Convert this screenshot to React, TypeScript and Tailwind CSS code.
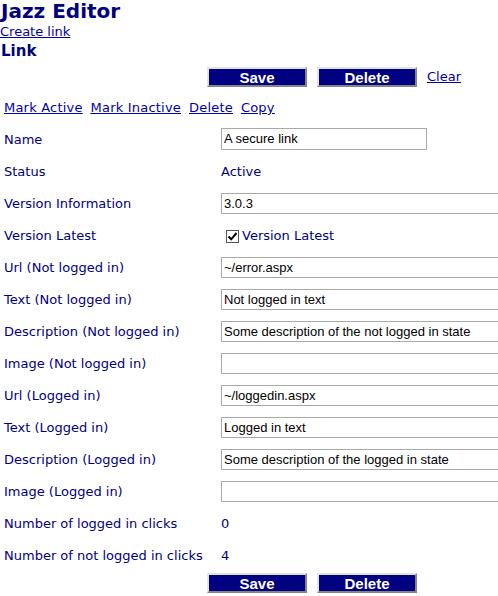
const rows: { label: string; kind: 'input' | 'text' | 'check'; value: string; short?: boolean }[] = [
  { label: 'Name', kind: 'input', value: 'A secure link', short: true },
  { label: 'Status', kind: 'text', value: 'Active' },
  { label: 'Version Information', kind: 'input', value: '3.0.3' },
  { label: 'Version Latest', kind: 'check', value: 'Version Latest' },
  { label: 'Url (Not logged in)', kind: 'input', value: '~/error.aspx' },
  { label: 'Text (Not logged in)', kind: 'input', value: 'Not logged in text' },
  { label: 'Description (Not logged in)', kind: 'input', value: 'Some description of the not logged in state' },
  { label: 'Image (Not logged in)', kind: 'input', value: '' },
  { label: 'Url (Logged in)', kind: 'input', value: '~/loggedin.aspx' },
  { label: 'Text (Logged in)', kind: 'input', value: 'Logged in text' },
  { label: 'Description (Logged in)', kind: 'input', value: 'Some description of the logged in state' },
  { label: 'Image (Logged in)', kind: 'input', value: '' },
  { label: 'Number of logged in clicks', kind: 'text', value: '0' },
  { label: 'Number of not logged in clicks', kind: 'text', value: '4' },
];

const verdana = "font-['Verdana','DejaVu_Sans',sans-serif]";
const arial = "font-['Arial','Liberation_Sans',sans-serif]";

const NavyButton = ({ children }: { children: string }) => (
  <button
    className={`w-[100px] h-[20px] bg-[#000080] text-white font-bold text-[15px] leading-none ${arial} border-2 border-t-[#e3e3e3] border-l-[#e3e3e3] border-r-[#858585] border-b-[#858585]`}
  >
    {children}
  </button>
);

export default function App() {
  return (
    <div className={`w-[498px] h-[596px] overflow-hidden bg-white text-[#000080] ${verdana}`}>
      <h1 className="text-[20px] font-bold leading-[22px] pl-[1px]">Jazz Editor</h1>
      <div className="text-[13px] leading-[20px]">
        <a className="text-[#0000aa] underline">Create link</a>
      </div>
      <h2 className="text-[15px] font-bold leading-[18px] pl-[1px]">Link</h2>

      <div className="flex items-center pt-[7px] pl-[207px] gap-[10px]">
        <NavyButton>Save</NavyButton>
        <NavyButton>Delete</NavyButton>
        <a className="text-[13px] text-[#0000aa] underline">Clear</a>
      </div>

      <div className="flex gap-[8px] pl-[4px] mt-[11px] text-[13px] leading-[20px] tracking-[0.2px] text-[#0000aa] underline">
        <a>Mark Active</a>
        <a>Mark Inactive</a>
        <a>Delete</a>
        <a>Copy</a>
      </div>

      <div className="mt-[6px]">
        {rows.map((r) => (
          <div key={r.label} className="flex items-center h-[32px] text-[13px]">
            <div className="w-[221px] shrink-0 pl-[4px] whitespace-nowrap">{r.label}</div>
            {r.kind === 'input' && (
              <div
                className={`${r.short ? 'w-[206px] h-[22px]' : 'w-[290px] h-[21px]'} -mt-[2px] shrink-0 border border-[#a9a9a9] bg-white text-black ${arial} text-[13px] leading-[19px] px-[2px] whitespace-nowrap overflow-hidden`}
              >
                {r.value}
              </div>
            )}
            {r.kind === 'text' && <div>{r.value}</div>}
            {r.kind === 'check' && (
              <div className="flex items-center pl-[5px]">
                <span className="w-[13px] h-[13px] border border-[#555] bg-white flex items-center justify-center">
                  <svg width="11" height="11" viewBox="0 0 11 11">
                    <path d="M1.5 5.5 L4.2 8.3 L9.5 2" stroke="black" strokeWidth="2" fill="none" />
                  </svg>
                </span>
                <span className="ml-[3px]">{r.value}</span>
              </div>
            )}
          </div>
        ))}
      </div>

      <div className="flex items-center mt-[1px] pl-[207px] gap-[10px]">
        <NavyButton>Save</NavyButton>
        <NavyButton>Delete</NavyButton>
      </div>
    </div>
  );
}
